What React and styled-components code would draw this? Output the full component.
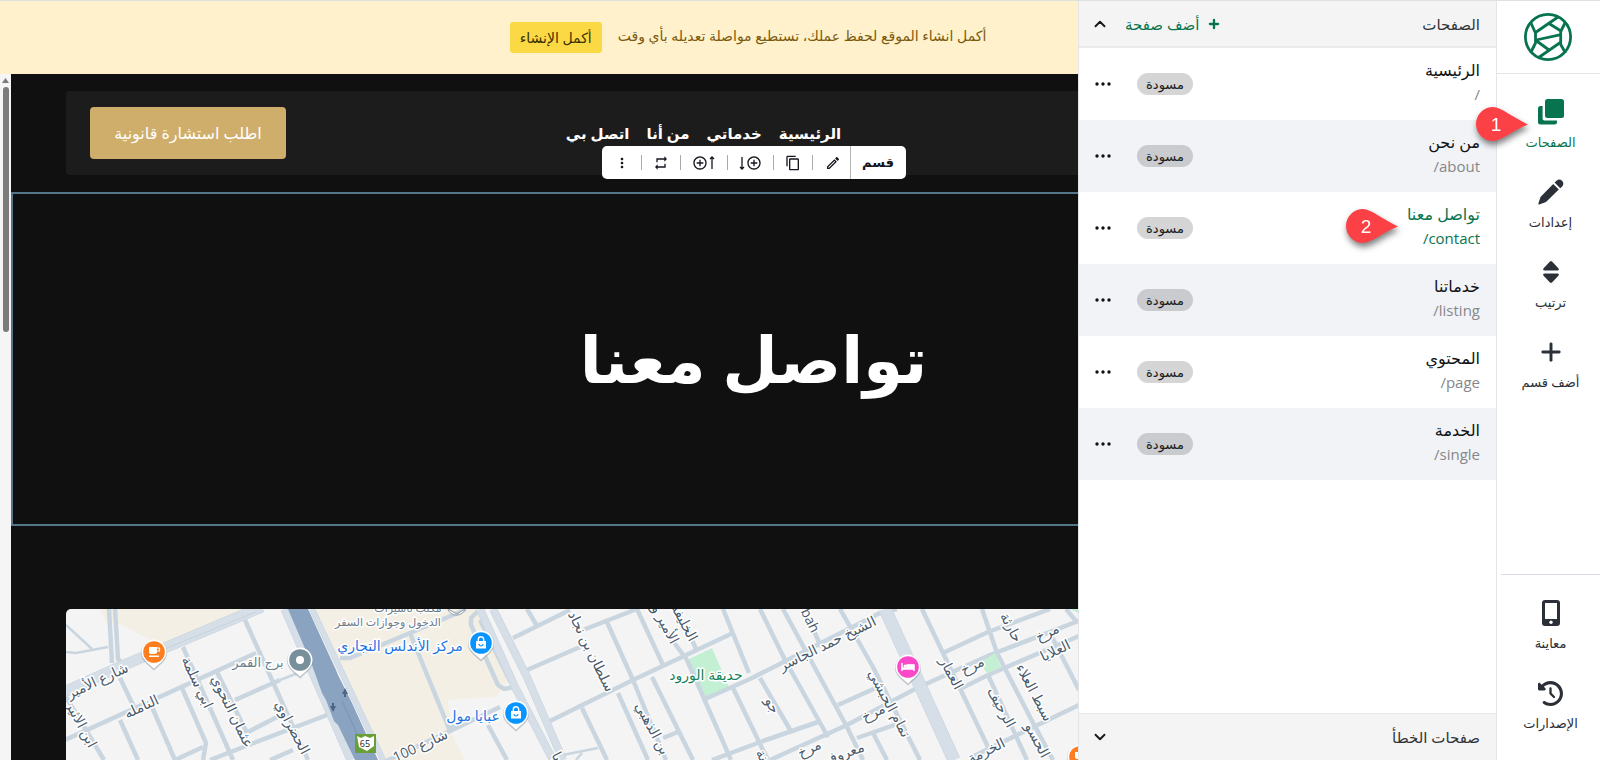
import React from "react";
import styled, { createGlobalStyle } from "styled-components";
import { FaClockRotateLeft } from "react-icons/fa6";
import {
  MdAddCircleOutline,
  MdContentCopy,
  MdMoreVert,
  MdOutlineEdit,
  MdRepeat,
} from "react-icons/md";
import { ChevronDown, ChevronUp, Plus } from "lucide-react";

const GREEN = "#08744f";
const INK = "#2b3038";
const LINE = "#e3e5e8";

const GlobalStyle = createGlobalStyle`
  *, *::before, *::after { box-sizing: border-box; }
  body {
    margin: 0;
    background: #fff;
    color: #16181c;
    font-family: "Open Sans", "DejaVu Sans", sans-serif;
    font-size: 14px;
  }
  button { font: inherit; color: inherit; border: 0; padding: 0; background: none; cursor: pointer; }
  a { color: inherit; text-decoration: none; }
  h1, h2, p, ul { margin: 0; padding: 0; }
  ul { list-style: none; }
  svg { display: block; flex: none; }
`;

const Shell = styled.div`
  display: flex;
  height: 100vh;
  overflow: hidden;
  border-top: 1px solid #dfe0e2;
`;

/* Tool rail */

const Rail = styled.nav`
  display: flex;
  flex-direction: column;
  flex: none;
  width: 104px;
  border-inline-end: 1px solid ${LINE};
  background: #fff;
`;

const LogoLink = styled.a`
  display: flex;
  align-items: center;
  justify-content: center;
  height: 73px;
  padding-right: 2px;
  border-bottom: 1px solid ${LINE};
`;

const RailButton = styled.button`
  position: relative;
  display: flex;
  flex-direction: column;
  align-items: center;
  gap: 4px;
  height: 80px;
  padding-top: 4px;
  padding-left: 4px;
  color: ${(p) => (p.$active ? GREEN : INK)};
  font-size: 13px;
  line-height: 24px;
`;

const RailGroup = styled.div`
  display: flex;
  flex-direction: column;
  padding-top: 20px;
`;

const RailFooter = styled(RailGroup)`
  margin-top: auto;
  margin-inline-end: 4px;
  padding: 20px 0 5px;
  border-top: 1px solid #dadde6;

  ${RailButton} { padding-left: 0; }
`;

const IconBox = styled.span`
  display: flex;
  align-items: center;
  justify-content: center;
  width: 28px;
  height: 28px;
`;

/* Pages panel */

const Workspace = styled.div`
  position: relative;
  display: flex;
  flex: 1;
  min-width: 0;
`;

const Panel = styled.aside`
  position: absolute;
  top: 0;
  bottom: 0;
  right: 0;
  z-index: 2;
  display: flex;
  flex-direction: column;
  width: 418px;
  border-left: 1px solid ${LINE};
  background: #fff;
`;

const PanelHeader = styled.header`
  display: flex;
  align-items: center;
  gap: 16px;
  height: 47px;
  padding: 0 16px 0 12px;
  background: #f4f4f4;
  border-bottom: 2px solid #e9eaec;
`;

const PanelFooter = styled(PanelHeader)`
  margin-top: auto;
  border-bottom: 0;
  border-top: 1px solid ${LINE};
`;

const PanelTitle = styled.h2`
  margin-inline-end: auto;
  color: #30333a;
  font-size: 15px;
  font-weight: 400;
`;

const AddPage = styled.button`
  display: flex;
  align-items: center;
  gap: 8px;
  color: ${GREEN};
  font-size: 15px;
`;

const PageRow = styled.li`
  display: flex;
  align-items: center;
  height: 72px;
  padding: 0 16px;
  background: ${(p) => (p.$striped ? "#f2f3f6" : "#fff")};
  color: ${(p) => (p.$active ? GREEN : "#101114")};
`;

const PageLink = styled.a`
  position: relative;
  display: flex;
  flex-direction: column;
  margin-inline-end: auto;
  padding-bottom: 4px;
  font-size: 16px;
  line-height: 24px;
`;

const PagePath = styled.span`
  direction: ltr;
  text-align: right;
  color: ${(p) => (p.$active ? GREEN : "#85878b")};
  font-size: 15px;
`;

const Badge = styled.span`
  width: 56px;
  margin-inline-end: 26px;
  border-radius: 11px;
  background: rgba(30, 32, 38, 0.19);
  color: #1c1d20;
  font-size: 13px;
  line-height: 22px;
  text-align: center;
`;

const MoreButton = styled.button`
  display: flex;
`;

const Marker = styled.span`
  position: absolute;
  top: ${(p) => p.$top}px;
  right: ${(p) => p.$right}px;
  z-index: 3;
  width: 56px;
  height: 44px;
  filter: drop-shadow(1px 4px 3px rgba(0, 0, 0, 0.5));

  text {
    font-family: "Liberation Sans", sans-serif;
    font-size: 19px;
  }
`;

/* Preview */

const Stage = styled.main`
  display: flex;
  flex: 1;
  flex-direction: column;
  min-width: 0;
`;

const Notice = styled.div`
  display: flex;
  align-items: center;
  justify-content: center;
  gap: 16px;
  flex: none;
  height: 73px;
  background: #fff1cc;
  color: #7c5a0c;
`;

const NoticeText = styled.p`
  padding-bottom: 4px;
  font-size: 14px;
`;

const NoticeButton = styled.button`
  width: 92px;
  height: 31px;
  border-radius: 3px;
  background: #fad945;
  color: #3c3000;
  font-size: 14px;
`;

const Viewport = styled.div`
  display: flex;
  flex: 1;
  min-height: 0;
`;

const ScrollTrack = styled.div`
  display: flex;
  flex-direction: column;
  align-items: center;
  gap: 4px;
  width: 11px;
  padding-top: 4px;
  background: #f5f5f5;
`;

const ScrollThumb = styled.div`
  width: 6px;
  height: 245px;
  border-radius: 3px;
  background: #7b7b7b;
`;

const Site = styled.div`
  flex: 1;
  min-width: 0;
  overflow: hidden;
  background: #101010;
  color: #fff;
`;

const SiteHeader = styled.header`
  position: relative;
  display: grid;
  grid-template-columns: 296px 1fr 196px;
  align-items: center;
  height: 84px;
  margin: 17px 55px;
  padding: 0 24px;
  border-radius: 4px;
  background: #1c1c1c;
`;

const SiteNav = styled.nav`
  display: flex;
  grid-column: 2;
  justify-content: center;
  gap: 17px;
  font-size: 15px;
  font-weight: 700;
`;

const GoldButton = styled.button`
  height: 52px;
  border-radius: 4px;
  background: #cfae6b;
  color: #fff;
  font-size: 16px;
`;

const Hero = styled.section`
  position: relative;
  display: flex;
  align-items: center;
  justify-content: center;
  height: 334px;
  border: 2px solid #557588;
`;

const HeroTitle = styled.h1`
  font-size: 64px;
  font-weight: 700;
  line-height: 96px;
`;

const SectionTools = styled.div`
  position: absolute;
  bottom: 100%;
  left: 50%;
  display: flex;
  align-items: center;
  width: 304px;
  height: 33px;
  margin-bottom: 15px;
  transform: translateX(-50%);
  border-radius: 5px;
  background: #fff;
  color: #14161f;
`;

const ToolsLabel = styled.strong`
  width: 56px;
  border-inline-end: 1px solid #b5b5b5;
  font-size: 13px;
  line-height: 33px;
  text-align: center;
`;

const ToolList = styled.div`
  display: flex;
  flex: 1;
  align-items: center;
  justify-content: space-between;
  padding: 0 9px 0 12px;
`;

const ToolButton = styled.button`
  display: flex;
  align-items: center;
  gap: 1px;
`;

const ToolDivider = styled.span`
  width: 1px;
  height: 15px;
  background: #aaa;
`;

const MapFrame = styled.section`
  height: 400px;
  margin: 83px 55px 0;
  overflow: hidden;
  border-radius: 5px;
  background: #f4f4f5;
`;

const MapText = styled.text`
  direction: rtl;
  font-family: "Open Sans", "DejaVu Sans", sans-serif;
  font-size: ${(p) => p.$size || 14}px;
  fill: ${(p) => p.$color || "#4b5b6c"};
  stroke: #fff;
  stroke-width: 3px;
  stroke-linejoin: round;
  paint-order: stroke;
  text-anchor: middle;
  dominant-baseline: central;
`;

/* Drawings */

const Logo = () => (
  <svg width="50" height="50" viewBox="0 0 50 50" fill="none" stroke="#08744f" strokeWidth="2.8" strokeLinejoin="round">
    <circle cx="25" cy="25" r="22.6" />
    <path d="M7.500 10 12.500 21V31L7.500 41M42.500 10 37.700 19.500V32.500L42.500 41" />
    <path d="M12.500 20.500 35 5M26 11.500 38 19M13 28 38 22.700M13 28.500 26 38M38 30 15 46" />
  </svg>
);

const PagesIcon = () => (
  <svg width="26" height="26" viewBox="0 0 26 26" fill="currentColor">
    <rect x="7" y="0" width="19" height="19" rx="2.5" />
    <path d="M2.500 7H4.600V19a2.600 2.600 0 0 0 2.600 2.600H19V23a2.500 2.500 0 0 1-2.500 2.500H2.500A2.500 2.500 0 0 1 0 23V9.500A2.500 2.500 0 0 1 2.500 7Z" />
  </svg>
);

const PencilIcon = () => (
  <svg width="26" height="26" viewBox="0 0 26 26" fill="currentColor">
    <path d="M15.200 5 20.800 10.600 8 23 1.200 25.500C.6 25.700.2 25.300.3 24.700L2.500 18Z" />
    <path d="M16.600 3.600 18.500 1.700C20.300.1 22.400.1 24 1.700 25.700 3.400 25.800 5.600 24.200 7.400L22.200 9.300Z" />
  </svg>
);

const SortIcon = () => (
  <svg width="18" height="24" viewBox="0 0 18 24" fill="currentColor">
    <path d="M8 1.500a1.500 1.500 0 0 1 2 0L16.400 8.300C17.300 9.500 16.800 10.500 15.500 10.500H2.500C1.200 10.500.7 9.500 1.600 8.300Z" />
    <path d="M8 22.500a1.500 1.500 0 0 0 2 0L16.400 15.700C17.300 14.500 16.800 13.500 15.500 13.500H2.500C1.200 13.500.7 14.500 1.600 15.700Z" />
  </svg>
);

const PhoneIcon = () => (
  <svg width="18" height="26" viewBox="0 0 18 26">
    <rect x="0" y="0" width="18" height="26" rx="3" fill="currentColor" />
    <rect x="3" y="3" width="12" height="16" fill="#fff" />
    <circle cx="9" cy="22.300" r="1.700" fill="#fff" />
  </svg>
);

const DotsIcon = () => (
  <svg width="16" height="4" viewBox="0 0 16 4" fill="#111">
    <circle cx="2" cy="2" r="1.700" />
    <circle cx="8" cy="2" r="1.700" />
    <circle cx="14" cy="2" r="1.700" />
  </svg>
);

const ArrowIcon = ({ down }) => (
  <svg width="6" height="14" viewBox="0 0 6 14" fill="none" stroke="currentColor" strokeWidth="1.300">
    <path d={down ? "M3 1V13M1 11 3 13 5 11" : "M3 13V1M1 3 3 1 5 3"} />
  </svg>
);

const StepMarker = ({ number, top, right }) => (
  <Marker $top={top} $right={right}>
    <svg width="56" height="44" viewBox="0 0 56 44">
      <path d="M19 5A17 17 0 1 0 19 39C27 39 38 29 54 22.500C38 15 27 5 19 5Z" fill="#fc4146" />
      <text x="22" y="29" textAnchor="middle" fill="#fff">{number}</text>
    </svg>
  </Marker>
);

const MINOR_ROADS = [
  "M43 0 46 54", "M49 0 52 50 58 56", "M-1 131 190 44", "M54 69 68 98", "M54 111 72 151", "M86 98 109 151",
  "M116 79 140 134 137 151", "M109 151 137 138", "M117 38 167 151", "M151 63 181 124", "M179 11 242 151",
  "M169 91 214 71", "M182 123 211 108", "M144 151 180 137 261 106", "M204 151 227 141", "M0 88 38 151",
  "M274 49H284L344 24 387 6 400 0", "M344 24 384 122 388 116", "M316 154 384 122 434 98",
  "M412 2 405 9 405 16 432 76 438 80 448 78", "M414 11 444 72", "M461 0 471 17", "M447 29 504 1",
  "M461 61 514 38", "M517 21 571 0", "M484 112 567 71 667 24", "M571 0 597 56", "M541 13 567 71 600 151",
  "M552 84 582 151", "M516 99 541 151", "M422 116 441 151", "M586 68 627 151", "M601 24 621 51 665 151",
  "M619 15 630 40", "M639 90 684 70 814 4 831 0", "M657 0 683 64", "M667 79 697 141 702 151", "M597 129 612 123",
  "M646 151 697 132 752 113", "M694 0 719 51 762 128", "M694 69 726 124", "M717 0 781 118 797 151",
  "M704 151 781 116 851 79 924 46 1015 11", "M772 96 812 78", "M774 0 807 58 854 151", "M748 22 755 38",
  "M856 0 877 44 922 138", "M877 44 922 23 984 0", "M916 0 931 44 964 108 987 151", "M896 79 922 66 1013 27",
  "M922 66 961 151", "M986 28 1013 81", "M1000 0 1010 12", "M904 149 957 123 1013 96", "M807 124 821 151", "M791 129 834 114",
];

const THIN_ROADS = ["M0 16 26 40", "M0 43 10 44 42 38", "M214 71 240 61", "M497 146 532 139", "M516 144 510 151"];

const WIDE_ROADS = [
  [11, "M-2 83 58 56 196 -2"],
  [9, "M219 0 285 151"],
  [6, "M246 0 317 151"],
  [8, "M414 0 449 78 487 151"],
  [8, "M427 0 461 68 497 151"],
  [13, "M819 0 888 151"],
];

const STREETS = [
  ["شارع الأمير", 31, 71, -25], ["النامله", 75, 97, -25], ["ابن الاثير", 16, 115, 62], ["ابي سلمة", 132, 73, 65],
  ["عثمان النحوي", 167, 102, 64], ["الحضراوي", 227, 118, 62], ["شارع 100", 354, 136, -25],
  ["سلطان بن نجاد", 526, 42, 64], ["الأمير و", 600, 15, 62], ["الخليفة", 619, 13, 62], ["بن الذهبي", 587, 119, 62],
  ["يا", 492, 147, 62], ["bah", 745, 11, 64], ["الشيخ حمد الجاسر", 761, 34, -26], ["جو", 707, 96, 62],
  ["تمام الحبشي", 824, 94, 62], ["مرخ", 807, 103, -26], ["مرخ", 743, 139, -26], ["مرخ", 906, 56, -26],
  ["مرخ", 981, 23, -26], ["العمار", 886, 64, 62], ["الرحيف", 936, 98, 62], ["سبط العلاء", 969, 83, 62],
  ["حارثة", 946, 18, 62], ["العلايا", 989, 41, -26], ["الحسو", 972, 131, 62], ["الخرمة", 920, 141, -26],
  ["معروف", 777, 144, -20], ["نة", 697, 146, 62],
];

const MapPin = ({ x, y, color, children }) => (
  <g transform={`translate(${x} ${y})`}>
    <path d="M-13 0A13 13 0 1 1 13 0C13 7 7 11 0 17.500C-7 11-13 7-13 0Z" fill="#8b98a3" opacity="0.5" transform="translate(0 1)" />
    <path d="M-12.500 0A12.500 12.500 0 1 1 12.500 0C12.500 7 6 11 0 16.500C-6 11-12.500 7-12.500 0Z" fill="#fff" />
    <circle r="10.800" fill={color} />
    {children}
  </g>
);

const BagGlyph = () => (
  <g>
    <path d="M-5-2H5V5.500H-5Z" fill="#fff" />
    <path d="M-2.700-2V-3.500A2.700 2.700 0 0 1 2.700-3.500V-2" fill="none" stroke="#fff" strokeWidth="1.400" />
    <path d="M-2 1A2 2 0 0 0 2 1" fill="none" stroke="#0895ff" strokeWidth="1.200" />
  </g>
);

const CupGlyph = () => (
  <g fill="#fff">
    <path d="M-5-5H3V0A2 2 0 0 1 1 2H-3A2 2 0 0 1-5 0Z" />
    <path d="M3-4H5.500V-1H3" fill="none" stroke="#fff" strokeWidth="1.200" />
    <rect x="-5" y="3.500" width="10" height="1.500" />
  </g>
);

const CityMap = () => (
  <svg width="100%" height="400" role="img" aria-label="خريطة">
    <path d="M34 0H194L95 37 54 15 40 13Z" fill="#f4efe4" />
    <path d="M249 0H411L444 70 430 88 382 91 384 122 399 151H319Z" fill="#f4efe4" />
    <path d="M621 51 646 39 663 78 639 89Z" fill="#c3f0d2" />
    <path d="M1004 0H1014V5Z" fill="#c3f0d2" />
    <g fill="none" stroke="#cad6df" strokeLinejoin="round">
      {MINOR_ROADS.map((d) => <path key={d} d={d} strokeWidth="4.500" />)}
      {THIN_ROADS.map((d) => <path key={d} d={d} strokeWidth="2.500" />)}
    </g>
    <path d="M914 54 929 44 935 58 921 64Z" fill="#c3f0d2" />
    <g fill="none" strokeLinejoin="round">
      {WIDE_ROADS.map(([w, d]) => <path key={d} d={d} stroke="#c6d2dc" strokeWidth={w} />)}
      {WIDE_ROADS.map(([w, d]) => <path key={d} d={d} stroke="#d6dfe7" strokeWidth={w - 1} />)}
    </g>
    <path d="M96 41 190 3" stroke="#c6d2dc" />
    <path d="M222 0H242L270 61 272 66 286 94 312 151H289L272 116 268 112 260 91 256 84 246 56Z" fill="#8aa3c1" />
    <path d="M276 92 300 144" stroke="#7893b5" />
    <path d="M279 79 282 85H280V88H278V85H276ZM267 103 270 97H268V94H266V97H264Z" fill="#4b6687" />
    {STREETS.map(([name, x, y, angle]) => (
      <MapText key={`${name}${x}`} transform={`translate(${x} ${y}) rotate(${angle})`}>{name}</MapText>
    ))}
    <MapText x="342" y="-2" $size={11} $color="#6c7b8a">مكتب تأشيرات</MapText>
    <MapText x="322" y="12" $size={11} $color="#6c7b8a">الدخول وجوازات السفر</MapText>
    <MapText x="192" y="53" $size={13} $color="#6c7f8d">برج القمر</MapText>
    <MapText x="334" y="36" $color="#1b74e4">مركز الأندلس التجاري</MapText>
    <MapText x="407" y="106" $color="#1b74e4">عبايا مول</MapText>
    <MapText x="640" y="65" $color="#178258">حديقة الورود</MapText>
    <rect x="289" y="125" width="21" height="19" fill="#689f38" />
    <path d="M291 127 295 129 299 127 304 129 308 127 308 137 301 142 293 138Z" fill="#fff" />
    <text x="299" y="138" fontSize="9" textAnchor="middle" fill="#222">65</text>
    <path d="M382 0A9 9 0 0 0 399 0L391 5Z" fill="#fff" stroke="#8b98a3" strokeWidth="1" />
    <MapPin x={88} y={43} color="#fd7d1f"><CupGlyph /></MapPin>
    <MapPin x={234} y={51} color="#78909c"><circle r="4" fill="#fff" /></MapPin>
    <MapPin x={415} y={34} color="#0895ff"><BagGlyph /></MapPin>
    <MapPin x={450} y={104} color="#0895ff"><BagGlyph /></MapPin>
    <MapPin x={842} y={58} color="#fb48c8">
      <path d="M-6-4V4M-6 2H6V4M-6 1H6V-2H-1V1M6-2V4" fill="none" stroke="#fff" strokeWidth="1.500" />
      <path d="M-1-2.500H5L6 1H-1Z" fill="#fff" />
      <circle cx="-3" cy="-1" r="1.500" fill="#fff" />
    </MapPin>
    <MapPin x={1014} y={148} color="#fd7d1f"><CupGlyph /></MapPin>
  </svg>
);

/* Content */

const TOOLS = [
  { label: "الصفحات", icon: <PagesIcon />, active: true, marker: 1 },
  { label: "إعدادات", icon: <PencilIcon /> },
  { label: "ترتيب", icon: <SortIcon /> },
  { label: "أضف قسم", icon: <Plus size={28} strokeWidth={2.5} /> },
];

const VIEW_TOOLS = [
  { label: "معاينة", icon: <PhoneIcon /> },
  { label: "الإصدارات", icon: <FaClockRotateLeft size={25} /> },
];

const PAGES = [
  { title: "الرئيسية", path: "/" },
  { title: "من نحن", path: "/about" },
  { title: "تواصل معنا", path: "/contact", active: true, marker: 2 },
  { title: "خدماتنا", path: "/listing" },
  { title: "المحتوي", path: "/page" },
  { title: "الخدمة", path: "/single" },
];

const SITE_LINKS = ["الرئيسية", "خدماتي", "من أنا", "اتصل بي"];

const SECTION_ACTIONS = [
  { label: "تعديل", icon: <MdOutlineEdit size={16} /> },
  { label: "نسخ", icon: <MdContentCopy size={16} /> },
  { label: "إضافة أسفل", icon: <><MdAddCircleOutline size={16} /><ArrowIcon down /></> },
  { label: "إضافة أعلى", icon: <><ArrowIcon /><MdAddCircleOutline size={16} /></> },
  { label: "تبديل", icon: <MdRepeat size={16} /> },
  { label: "المزيد", icon: <MdMoreVert size={16} /> },
];

const RailItem = ({ label, icon, active, marker }) => (
  <RailButton type="button" $active={active}>
    <IconBox>{icon}</IconBox>
    {label}
    {marker && <StepMarker number={marker} top={8} right={70} />}
  </RailButton>
);

export default function App() {
  return (
    <>
      <GlobalStyle />
      <Shell dir="rtl" lang="ar">
        <Rail>
          <LogoLink href="#" aria-label="الشعار"><Logo /></LogoLink>
          <RailGroup>
            {TOOLS.map((tool) => <RailItem key={tool.label} {...tool} />)}
          </RailGroup>
          <RailFooter>
            {VIEW_TOOLS.map((tool) => <RailItem key={tool.label} {...tool} />)}
          </RailFooter>
        </Rail>

        <Workspace>
          <Panel>
            <PanelHeader>
              <PanelTitle>الصفحات</PanelTitle>
              <AddPage type="button"><Plus size={14} strokeWidth={4} />أضف صفحة</AddPage>
              <MoreButton type="button" aria-label="طي"><ChevronUp size={18} strokeWidth={2.5} /></MoreButton>
            </PanelHeader>
            <ul>
              {PAGES.map(({ title, path, active, marker }, i) => (
                <PageRow key={path} $striped={i % 2 === 1} $active={active}>
                  <PageLink href={`#${path}`}>
                    {title}
                    <PagePath $active={active}>{path}</PagePath>
                    {marker && <StepMarker number={marker} top={2} right={80} />}
                  </PageLink>
                  <Badge>مسودة</Badge>
                  <MoreButton type="button" aria-label="خيارات"><DotsIcon /></MoreButton>
                </PageRow>
              ))}
            </ul>
            <PanelFooter as="footer">
              <PanelTitle>صفحات الخطأ</PanelTitle>
              <MoreButton type="button" aria-label="توسيع"><ChevronDown size={18} strokeWidth={2.5} /></MoreButton>
            </PanelFooter>
          </Panel>

          <Stage>
            <Notice>
              <NoticeText>أكمل انشاء الموقع لحفظ عملك، تستطيع مواصلة تعديله بأي وقت</NoticeText>
              <NoticeButton type="button">أكمل الإنشاء</NoticeButton>
            </Notice>
            <Viewport>
              <Site>
                <SiteHeader>
                  <SiteNav>
                    {SITE_LINKS.map((link) => <a key={link} href="#site">{link}</a>)}
                  </SiteNav>
                  <GoldButton type="button">اطلب استشارة قانونية</GoldButton>
                </SiteHeader>
                <Hero>
                  <SectionTools>
                    <ToolsLabel>قسم</ToolsLabel>
                    <ToolList>
                      {SECTION_ACTIONS.map(({ label, icon }, i) => (
                        <React.Fragment key={label}>
                          {i > 0 && <ToolDivider />}
                          <ToolButton type="button" aria-label={label}>{icon}</ToolButton>
                        </React.Fragment>
                      ))}
                    </ToolList>
                  </SectionTools>
                  <HeroTitle>تواصل معنا</HeroTitle>
                </Hero>
                <MapFrame><CityMap /></MapFrame>
              </Site>
              <ScrollTrack aria-hidden="true">
                <svg width="7" height="5" viewBox="0 0 7 5"><path d="M0 5 3.500 0 7 5Z" fill="#7b7b7b" /></svg>
                <ScrollThumb />
              </ScrollTrack>
            </Viewport>
          </Stage>
        </Workspace>
      </Shell>
    </>
  );
}
